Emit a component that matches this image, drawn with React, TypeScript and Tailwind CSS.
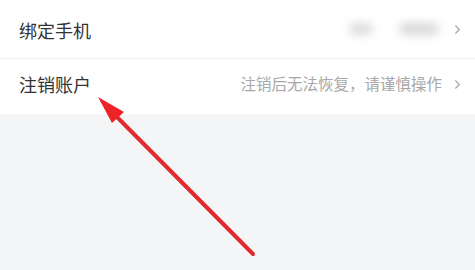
import { ChevronRight } from "lucide-react";

const font = { fontFamily: '"Noto Sans CJK SC", "Noto Sans", sans-serif' };

const App = () => {
  return (
    <div className="relative w-[475px] h-[270px] overflow-hidden bg-[#f4f5f7]" style={font}>
      <div className="bg-white">
        <div className="flex items-center justify-between h-[58px] pl-[19px] pr-[10px]">
          <span className="text-[18px] text-[#333333] pt-[3px]">绑定手机</span>
          <div className="flex items-center">
            <div className="w-[24px] h-[12px] bg-[#dcdcdc] rounded-full blur-[5px] mr-[26px]" />
            <div className="w-[40px] h-[12px] bg-[#d8d8d8] rounded-full blur-[5px] mr-[11px]" />
            <ChevronRight className="w-[15px] h-[15px] text-[#a3a3a3]" strokeWidth={1.7} />
          </div>
        </div>
        <div className="h-px bg-[#f2f2f2]" />
        <div className="flex items-center justify-between h-[55px] pl-[19px] pr-[10px]">
          <span className="text-[18px] text-[#333333] -mt-[5px]">注销账户</span>
          <div className="flex items-center -mt-[5px]">
            <span className="text-[15.5px] text-[#a8a8a8] mr-[8px]">注销后无法恢复，请谨慎操作</span>
            <ChevronRight className="w-[15px] h-[15px] text-[#a3a3a3]" strokeWidth={1.7} />
          </div>
        </div>
      </div>

      <svg className="absolute inset-0 pointer-events-none" width="475" height="270" viewBox="0 0 475 270">
        <line x1="253" y1="254" x2="113" y2="113" stroke="#e02a2e" strokeWidth="4" strokeLinecap="round" />
        <polygon points="98,97 124,112 112,123" fill="#ee2328" />
      </svg>
    </div>
  );
};

export default App;
